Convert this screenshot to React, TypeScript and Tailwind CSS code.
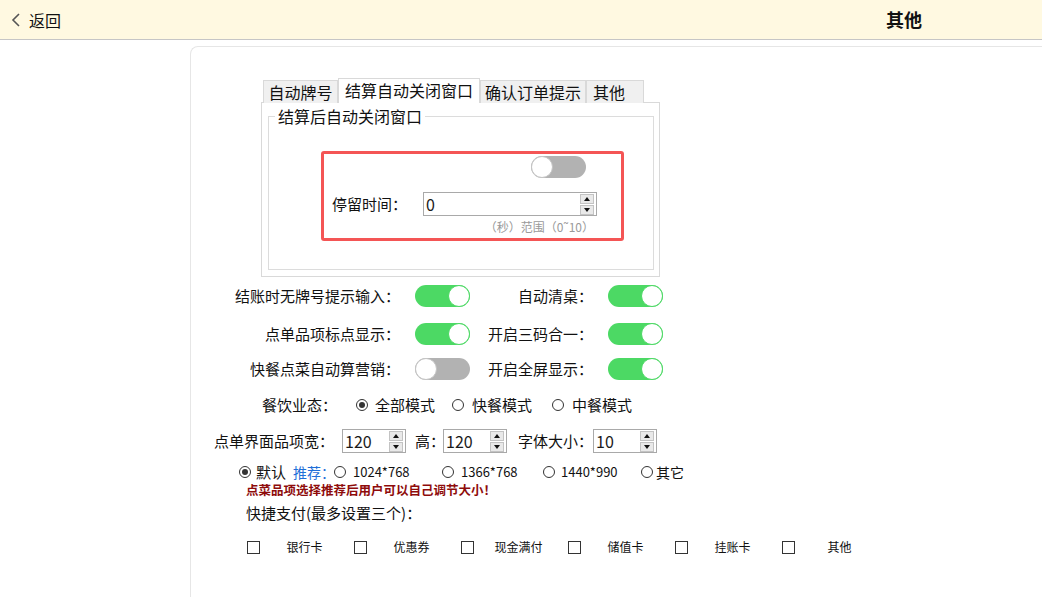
import type { ReactNode } from 'react';

function Toggle({ on }: { on: boolean }) {
  return (
    <span
      className={`flex h-[22px] w-[55px] flex-none items-center rounded-full ${
        on ? 'justify-end bg-[#4cd964]' : 'justify-start bg-[#b2b2b2]'
      }`}
    >
      <span
        className={`h-[22px] w-[22px] rounded-full border bg-white ${
          on ? 'border-[#4cd964]' : 'border-[#c4c4c4]'
        }`}
      />
    </span>
  );
}

function Radio({ checked = false }: { checked?: boolean }) {
  return (
    <span className="flex h-[12px] w-[12px] flex-none items-center justify-center rounded-full border border-[#333] bg-white">
      {checked && <span className="h-[6px] w-[6px] rounded-full bg-[#333]" />}
    </span>
  );
}

function Spin() {
  return (
    <span className="flex flex-none flex-col gap-px">
      <span className="flex h-[10px] w-[14px] items-center justify-center border border-[#c3c3c3] bg-[#e9e9e9]">
        <span className="h-0 w-0 border-x-[3px] border-b-[4px] border-x-transparent border-b-[#111]" />
      </span>
      <span className="flex h-[10px] w-[14px] items-center justify-center border border-[#c3c3c3] bg-[#e9e9e9]">
        <span className="h-0 w-0 border-x-[3px] border-t-[4px] border-x-transparent border-t-[#111]" />
      </span>
    </span>
  );
}

function NumBox({ value, className }: { value: string; className: string }) {
  return (
    <span
      className={`flex h-[24px] flex-none items-center justify-between border border-[#a9a9a9] bg-white pl-[2px] pr-[2px] text-[16px] leading-none text-[#1a1a1a] ${className}`}
    >
      <span>{value}</span>
      <Spin />
    </span>
  );
}

function SwitchRow({
  left,
  leftOn,
  right,
  rightOn,
  className,
}: {
  left: string;
  leftOn: boolean;
  right: string;
  rightOn: boolean;
  className: string;
}) {
  return (
    <div className={`flex h-[22px] items-center text-[15px] ${className}`}>
      <span className="w-[209px] text-right">{left}</span>
      <span className="ml-[15px]">
        <Toggle on={leftOn} />
      </span>
      <span className="w-[123px] text-right">{right}</span>
      <span className="ml-[15px]">
        <Toggle on={rightOn} />
      </span>
    </div>
  );
}

function Tab({ children, active, w }: { children: ReactNode; active?: boolean; w: string }) {
  return (
    <span
      className={`flex items-center justify-center border border-b-0 border-[#d9d9d9] text-[16px] leading-none ${w} ${
        active ? 'relative z-10 h-[25px] bg-white pb-[2px]' : 'h-[23px] bg-[#f0f0f0]'
      }`}
    >
      {children}
    </span>
  );
}

const payments = ['银行卡', '优惠券', '现金满付', '储值卡', '挂账卡', '其他'];

export default function App() {
  return (
    <div className="h-[597px] w-[1042px] overflow-hidden bg-white font-['Noto_Sans_CJK_SC','Noto_Sans',sans-serif] text-[#111]">
      {/* Top bar */}
      <header className="flex h-[40px] items-center border-b border-[#c6c6c6] bg-[#fff9e1]">
        <span className="ml-[11px] flex items-center gap-[8px] text-[16px]">
          <svg width="10" height="16" viewBox="0 0 10 16" fill="none" stroke="#555" strokeWidth="1.6">
            <polyline points="8,2 2,8 8,14" />
          </svg>
          返回
        </span>
        <span className="ml-auto w-[276px] text-center text-[18px] font-bold">其他</span>
      </header>

      {/* Settings card */}
      <div className="ml-[190px] mt-[6px] h-[600px] w-[900px] rounded-tl-[8px] border-l border-t border-[#e6e6e6]">
        <div className="ml-[72px] mt-[31px] flex h-[25px] items-end">
          <Tab w="w-[75px]">自动牌号</Tab>
          <Tab w="w-[142px]" active>
            结算自动关闭窗口
          </Tab>
          <Tab w="w-[106px]">确认订单提示</Tab>
          <Tab w="w-[58px] justify-start pl-[6px]">其他</Tab>
        </div>
        <div className="-mt-px ml-[70px] h-[175px] w-[399px] border border-[#d9d9d9] bg-white pt-[5px]">
          <fieldset className="ml-[6px] h-[162px] w-[386px] border border-[#dcdcdc]">
            <legend className="ml-[6px] px-[3px] text-[16px] leading-[16px]">结算后自动关闭窗口</legend>
            <div className="ml-[52px] mt-[27px] h-[90px] w-[303px] rounded-[3px] border-[3px] border-[#f45555]">
              <div className="ml-[207px] mt-[2px]">
                <Toggle on={false} />
              </div>
              <div className="mt-[14px] flex items-center">
                <span className="ml-[8px] w-[91px] text-[15px]">停留时间：</span>
                <NumBox value="0" className="w-[174px]" />
              </div>
              <div className="mt-[4px] w-[270px] whitespace-nowrap text-right text-[12px] leading-[14px] text-[#9a9a9a]">
                （秒）范围（0˜10）
              </div>
            </div>
          </fieldset>
        </div>

        <SwitchRow className="mt-[8px]" left="结账时无牌号提示输入：" leftOn right="自动清桌：" rightOn />
        <SwitchRow className="mt-[16px]" left="点单品项标点显示：" leftOn right="开启三码合一：" rightOn />
        <SwitchRow className="mt-[13px]" left="快餐点菜自动算营销：" leftOn={false} right="开启全屏显示：" rightOn />

        <div className="ml-[71px] mt-[15px] flex h-[20px] items-center whitespace-nowrap text-[15px]">
          <span className="w-[94px]">餐饮业态：</span>
          <Radio checked />
          <span className="ml-[7px] w-[77px]">全部模式</span>
          <Radio />
          <span className="ml-[8px] w-[80px]">快餐模式</span>
          <Radio />
          <span className="ml-[8px]">中餐模式</span>
        </div>

        <div className="ml-[23px] mt-[14px] flex h-[24px] items-center whitespace-nowrap text-[15px]">
          <span className="w-[128px]">点单界面品项宽：</span>
          <NumBox value="120" className="w-[64px]" />
          <span className="ml-[9px] w-[28px]">高：</span>
          <NumBox value="120" className="w-[64px]" />
          <span className="ml-[11px] w-[75px]">字体大小：</span>
          <NumBox value="10" className="w-[64px]" />
        </div>

        <div className="ml-[48px] mt-[10px] flex h-[18px] items-center whitespace-nowrap text-[13px]">
          <Radio checked />
          <span className="ml-[5px] w-[37px] text-[15px]">默认</span>
          <span className="w-[41px] text-[14px] text-[#1f6fd8]">推荐：</span>
          <Radio />
          <span className="ml-[7px] w-[89px]">1024*768</span>
          <Radio />
          <span className="ml-[7px] w-[82px]">1366*768</span>
          <Radio />
          <span className="ml-[6px] w-[80px]">1440*990</span>
          <Radio />
          <span className="ml-[3px] text-[14px]">其它</span>
        </div>

        <div className="ml-[55px] mt-[2px] h-[14px] whitespace-nowrap text-[12.5px] font-bold leading-[14px] text-[#8e0b0b]">
          点菜品项选择推荐后用户可以自己调节大小！
        </div>

        <div className="ml-[55px] mt-[7px] h-[18px] text-[15px] leading-[18px]">快捷支付(最多设置三个)：</div>

        <div className="ml-[56px] mt-[17px] flex h-[16px] items-center text-[12px]">
          {payments.map((p) => (
            <span key={p} className="flex w-[107px] items-center">
              <span className="h-[13px] w-[13px] flex-none border border-[#333]" />
              <span className="w-[89px] text-center">{p}</span>
            </span>
          ))}
        </div>
      </div>
    </div>
  );
}
